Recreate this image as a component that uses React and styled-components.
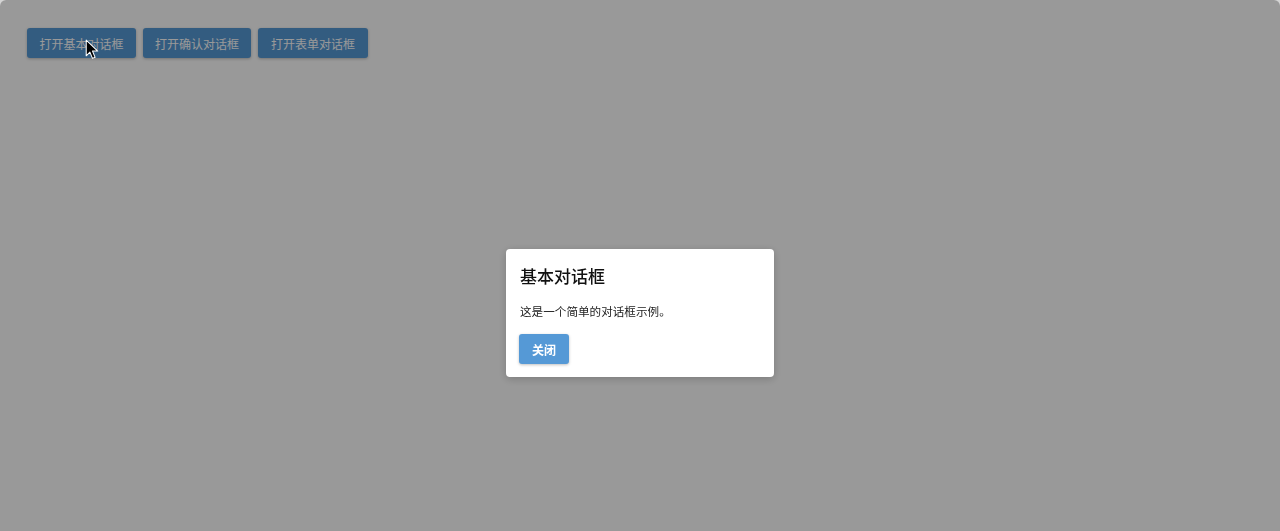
import React, {useState} from 'react'
import styled, {createGlobalStyle} from 'styled-components'

const Global = createGlobalStyle`
   html, body {
      margin: 0;
      padding: 0;
      background: #d4d4d4;
   }
   body {
      font-family: 'Noto Sans', 'Noto Sans CJK SC', sans-serif;
   }
`;

const Page = styled.div`
   min-height: 531px;
   background: #ffffff;
   border-radius: 6px 6px 0 0;
   padding: 28px 27px;
   box-sizing: border-box;
`;

const Toolbar = styled.div`
   display: flex;
   gap: 7px;
`;

const Button = styled.button`
   height: 30px;
   padding: 0 ${props => props.pad || 12.5}px;
   border: 0;
   border-radius: 3px;
   background-color: #5599d6;
   color: #ffffff;
   font-family: 'Noto Sans CJK SC', sans-serif;
   font-size: 12px;
   font-weight: ${props => props.bold ? 600 : 400};
   cursor: pointer;
   box-shadow: 0 1px 3px rgba(0,0,0,0.25);
`;

const Overlay = styled.div`
   position: fixed;
   inset: 0;
   background-color: rgba(0,0,0,0.4);
   border-radius: 6px 6px 0 0;
   display: flex;
   justify-content: center;
   align-items: flex-start;
   padding-top: 249px;
`;

const Dialog = styled.div`
   width: 268px;
   box-sizing: border-box;
   background: #ffffff;
   border-radius: 4px;
   padding: 15px 13px 13px;
   box-shadow: 0 2px 8px rgba(0,0,0,0.2);
`;

const Title = styled.h3`
   margin: 0 0 15px 1px;
   font-family: 'Noto Sans CJK SC', sans-serif;
   font-size: 17px;
   line-height: 23px;
   font-weight: 500;
   color: #111;
`;

const Body = styled.p`
   margin: 0 0 14px 1px;
   font-family: 'Noto Sans CJK SC', sans-serif;
   font-size: 11.6px;
   line-height: 18px;
   color: #222;
`;

const Pointer = styled.svg`
   position: fixed;
   left: 85px;
   top: 39px;
   width: 15px;
   height: 22px;
   pointer-events: none;
`;

const App = () => {
   const [open, setOpen] = useState(true);

   return(
      <>
         <Global/>
         <Page>
            <Toolbar>
               <Button onClick={() => setOpen(true)}>打开基本对话框</Button>
               <Button pad={12}>打开确认对话框</Button>
               <Button pad={13}>打开表单对话框</Button>
            </Toolbar>
         </Page>
         {open
            ? <Overlay>
                 <Dialog>
                    <Title>基本对话框</Title>
                    <Body>这是一个简单的对话框示例。</Body>
                    <Button bold pad={13} onClick={() => setOpen(false)}>关闭</Button>
                 </Dialog>
              </Overlay>
            : undefined
         }
         <Pointer viewBox="0 0 14 21">
            <path d="M1 1 L1 16 L4.5 12.5 L7 18.5 L9.5 17.5 L7 11.5 L12 11.5 Z"
               fill="#000" stroke="#fff" strokeWidth="1" strokeLinejoin="round"/>
         </Pointer>
      </>
   );
}

export default App;
